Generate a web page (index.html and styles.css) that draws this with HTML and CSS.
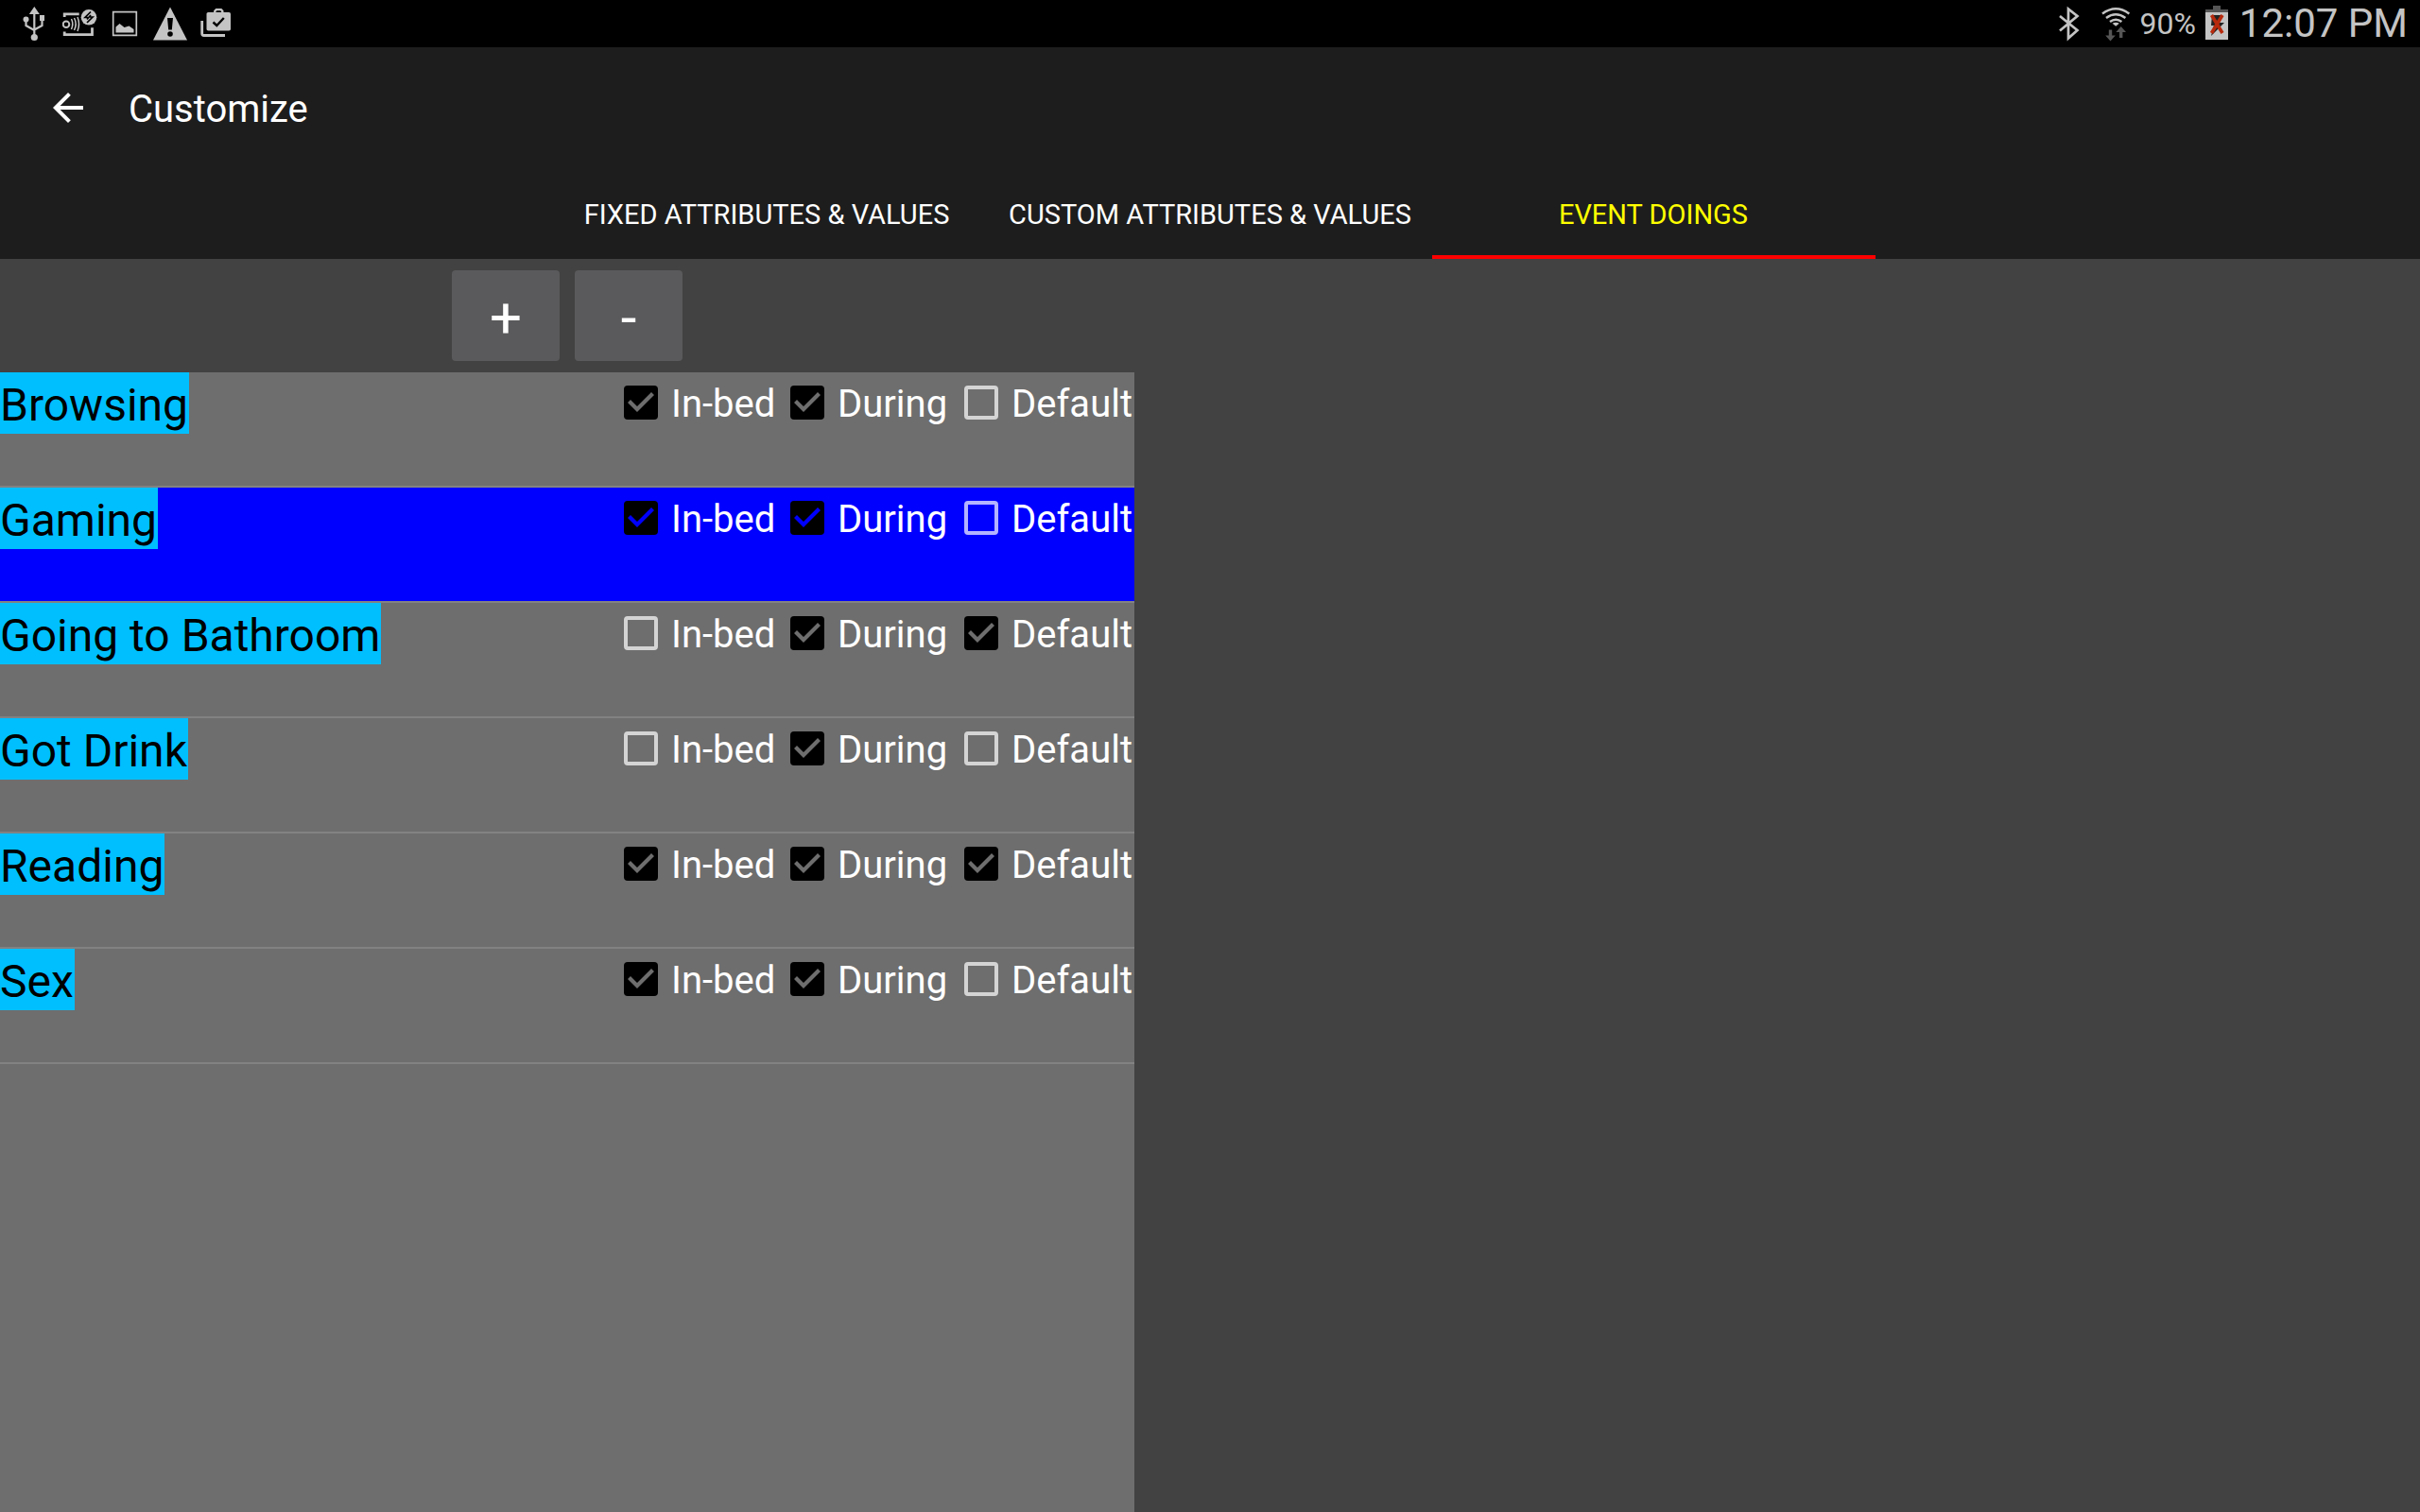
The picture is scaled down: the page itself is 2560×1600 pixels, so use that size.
FILE: index.html
```html
<!DOCTYPE html>
<html lang="en">
<head>
<meta charset="utf-8">
<meta name="viewport" content="width=device-width, initial-scale=1">
<title>Customize</title>
<link rel="stylesheet" href="styles.css">
</head>
<body>
<div class="status">
  <div class="status-left">
    <svg width="29" height="38" viewBox="24 6 29 38" aria-hidden="true"><g fill="#c4c4c4"><path d="M36.300 7l5.500 8h-11z"/><circle cx="27.500" cy="20.500" r="3"/><path d="M42 16h5v6h-5z"/><circle cx="36.300" cy="39.500" r="3.600"/></g><path d="M36.300 12v27M27.500 21v6l8.800 5M44.500 21v6l-8.200 4.500" fill="none" stroke="#c4c4c4" stroke-width="2.200"/></svg>
    <svg width="38" height="38" viewBox="66 6 38 38" aria-hidden="true"><g fill="none" stroke="#c4c4c4"><path d="M68.200 18v-3.200h15.500M68.200 33.500v3.200h29.300v-7.500" stroke-width="2.800"/><circle cx="70" cy="25.700" r="3.300" stroke-width="2"/><path d="M75.500 20q2.600 5.500 0 11M78.500 19q3.400 6.500 0 13M82 18q3 7.500 0 15" stroke-width="1.500"/></g><circle cx="94" cy="18.300" r="8.300" fill="#c4c4c4"/><path d="M96 12.500l-6 6h3M92 24l6-6h-3M92 20.500l4-4.500" fill="none" stroke="#000" stroke-width="1.700"/></svg>
    <svg width="30" height="38" viewBox="117 6 30 38" aria-hidden="true"><path d="M119.700 12.700h24.600v24.600h-24.600z" fill="none" stroke="#c4c4c4" stroke-width="1.700"/><path d="M122.500 34.500v-6l4-3.500 5 4 5-1.500 5 3.500v3.500z" fill="#c4c4c4"/></svg>
    <svg width="39" height="38" viewBox="160 6 39 38" aria-hidden="true"><path d="M180 7.500l18 35h-36z" fill="#c4c4c4"/><path d="M177 19h6l-1.200 12.500h-3.600z"/><circle cx="180" cy="36" r="2.800"/></svg>
    <svg width="33" height="38" viewBox="212 6 33 38" aria-hidden="true"><path d="M213.700 22v13.500q0 2 2 2H238" fill="none" stroke="#c4c4c4" stroke-width="2.800"/><rect x="218.500" y="13" width="25.500" height="19.600" rx="1.800" fill="#c4c4c4"/><path d="M227.300 14v-2.300l1.500-1.600h5l1.500 1.600V14" fill="none" stroke="#c4c4c4" stroke-width="2.400"/><path d="M225.500 23.500l3.800 3.500 7.500-8" fill="none" stroke="#000" stroke-width="2.400"/></svg>
  </div>
  <div class="status-right">
    <svg width="24" height="38" viewBox="2177 6 24 38" aria-hidden="true"><path d="M2179 17l18.500 15-9.500 8.500v-31l9.500 7.500-18.500 15.500" fill="none" stroke="#c4c4c4" stroke-width="2.700"/></svg>
    <svg class="wifi" width="30" height="38" viewBox="2223 6 30 38" aria-hidden="true"><g fill="none" stroke="#c4c4c4" stroke-width="2.500"><path d="M2224 14.500q14.200-10.500 28.400 0M2228 19q10.200-7.500 20.400 0M2232 23q6.200-4.500 12.400 0"/></g><path d="M2234.500 24.800q3.700-2 7.400 0l-3.700 3z" fill="#c4c4c4"/><path d="M2230.800 31.500h3.400v6h3.600l-5.300 6-5.300-6h3.600zM2242 40v-6h-3.600l5.300-6 5.300 6h-3.600v6z" fill="#555"/></svg>
    <span class="percent">90%</span>
    <svg class="battery" width="24" height="38" viewBox="2332 6 24 38" aria-hidden="true"><path d="M2340 6h8v4h8v3h-24v-3h8z" fill="#555"/><path d="M2332 13h24v29h-24z" fill="#c4c4c4"/><path d="M2339 16h10l-2 8h5l-14 14 3-11h-3z" fill="#222"/><path d="M2338.500 16l11.500 19M2350 16l-11.500 19" stroke="#b72a0d" stroke-width="3.600"/></svg>
    <time class="clock">12:07 PM</time>
  </div>
</div>
<header class="appbar">
  <div class="toolbar">
    <button class="back" type="button" aria-label="Back"><svg width="48" height="48" viewBox="0 0 24 24" aria-hidden="true"><path d="M20 11H7.830l5.590-5.590L12 4l-8 8 8 8 1.410-1.410L7.830 13H20z" fill="#fff"/></svg></button>
    <h1 class="title">Customize</h1>
  </div>
  <nav class="tabs">
    <a class="tab" href="#fixed">FIXED ATTRIBUTES &amp; VALUES</a>
    <a class="tab" href="#custom">CUSTOM ATTRIBUTES &amp; VALUES</a>
    <a class="tab tab-active" href="#events" aria-current="page">EVENT DOINGS</a>
  </nav>
</header>
<main class="pane">
  <div class="actions">
    <button class="action" type="button">+</button>
    <button class="action" type="button">-</button>
  </div>
  <ul class="list">
    <li class="row"><span class="name">Browsing</span><div class="options">
      <label class="option"><input type="checkbox" checked>In-bed</label><label class="option"><input type="checkbox" checked>During</label><label class="option"><input type="checkbox">Default</label></div></li>
    <li class="row row-selected"><span class="name">Gaming</span><div class="options">
      <label class="option"><input type="checkbox" checked>In-bed</label><label class="option"><input type="checkbox" checked>During</label><label class="option"><input type="checkbox">Default</label></div></li>
    <li class="row"><span class="name">Going to Bathroom</span><div class="options">
      <label class="option"><input type="checkbox">In-bed</label><label class="option"><input type="checkbox" checked>During</label><label class="option"><input type="checkbox" checked>Default</label></div></li>
    <li class="row"><span class="name">Got Drink</span><div class="options">
      <label class="option"><input type="checkbox">In-bed</label><label class="option"><input type="checkbox" checked>During</label><label class="option"><input type="checkbox">Default</label></div></li>
    <li class="row"><span class="name">Reading</span><div class="options">
      <label class="option"><input type="checkbox" checked>In-bed</label><label class="option"><input type="checkbox" checked>During</label><label class="option"><input type="checkbox" checked>Default</label></div></li>
    <li class="row"><span class="name">Sex</span><div class="options">
      <label class="option"><input type="checkbox" checked>In-bed</label><label class="option"><input type="checkbox" checked>During</label><label class="option"><input type="checkbox">Default</label></div></li>
  </ul>
</main>
</body>
</html>
```
FILE: styles.css
```css
* {
  box-sizing: border-box;
}

body {
  display: flex;
  flex-direction: column;
  min-height: 100vh;
  margin: 0;
  background: #424242;
  color: #fff;
  font-family: Roboto, "Noto Sans", sans-serif;
}

svg {
  display: block;
  flex: none;
}

.status {
  display: flex;
  justify-content: space-between;
  align-items: center;
  height: 50px;
  padding: 0 13px 0 24px;
  background: #000;
  color: #c4c4c4;
}

.status-left {
  display: flex;
  gap: 13px;
}

.status-right {
  display: flex;
  align-items: center;
}

.wifi {
  margin-left: 22px;
}

.percent {
  margin-left: 10px;
  font-size: 32px;
  line-height: 48px;
}

.battery {
  margin: 0 12px 0 10px;
}

.clock {
  font-size: 42px;
  line-height: 48px;
}

.appbar {
  background: #1d1d1d;
}

.toolbar {
  display: flex;
  align-items: center;
  height: 128px;
  padding: 0 48px;
}

.back {
  padding: 0;
  border: 0;
  background: none;
}

.title {
  margin: 0 0 0 40px;
  padding-top: 3px;
  font-size: 40px;
  font-weight: 400;
  line-height: 48px;
}

.tabs {
  display: flex;
  justify-content: center;
}

.tab {
  width: 469px;
  height: 96px;
  padding-top: 4px;
  border-bottom: 4px solid transparent;
  color: #fff;
  font-size: 29px;
  line-height: 90px;
  text-align: center;
  text-decoration: none;
}

.tab-active {
  border-bottom-color: #f00;
  color: #ff0;
}

.pane {
  display: flex;
  flex: 1;
  flex-direction: column;
  width: 46.875%;
}

.actions {
  display: flex;
  justify-content: center;
  gap: 16px;
  padding: 12px 0;
}

.action {
  width: 114px;
  height: 96px;
  padding: 4px 0 0;
  border: 0;
  border-radius: 4px;
  background: #5a5a5c;
  color: #fff;
  font-family: inherit;
  font-size: 60px;
}

.list {
  flex: 1;
  margin: 0;
  padding: 0;
  background: #6e6e6e;
  list-style: none;
}

.row {
  --row-color: #6e6e6e;
  display: flex;
  justify-content: space-between;
  align-items: flex-start;
  height: 122px;
  border-bottom: 2px solid #828282;
  background: var(--row-color);
}

.row-selected {
  --row-color: #00f;
}

.name {
  padding: 6px 1px 2px 0;
  background: #00bfff;
  color: #000;
  font-size: 48px;
  line-height: 57px;
}

.options {
  display: grid;
  grid-template-columns: 176px 184px 194px;
}

.option {
  display: flex;
  align-items: flex-start;
  font-size: 40px;
  line-height: 68px;
}

.option input {
  width: 36px;
  height: 36px;
  margin: 14px;
  border: 4px solid rgba(255, 255, 255, 0.7);
  border-radius: 4px;
  appearance: none;
}

.option input:checked {
  border: 0;
  background: #000;
}

.option input:checked::after {
  display: block;
  width: 36px;
  height: 36px;
  background: var(--row-color);
  clip-path: polygon(4px 18px, 7px 15px, 14px 22px, 29px 7px, 32px 10px, 14px 28px);
  content: "";
}
```
